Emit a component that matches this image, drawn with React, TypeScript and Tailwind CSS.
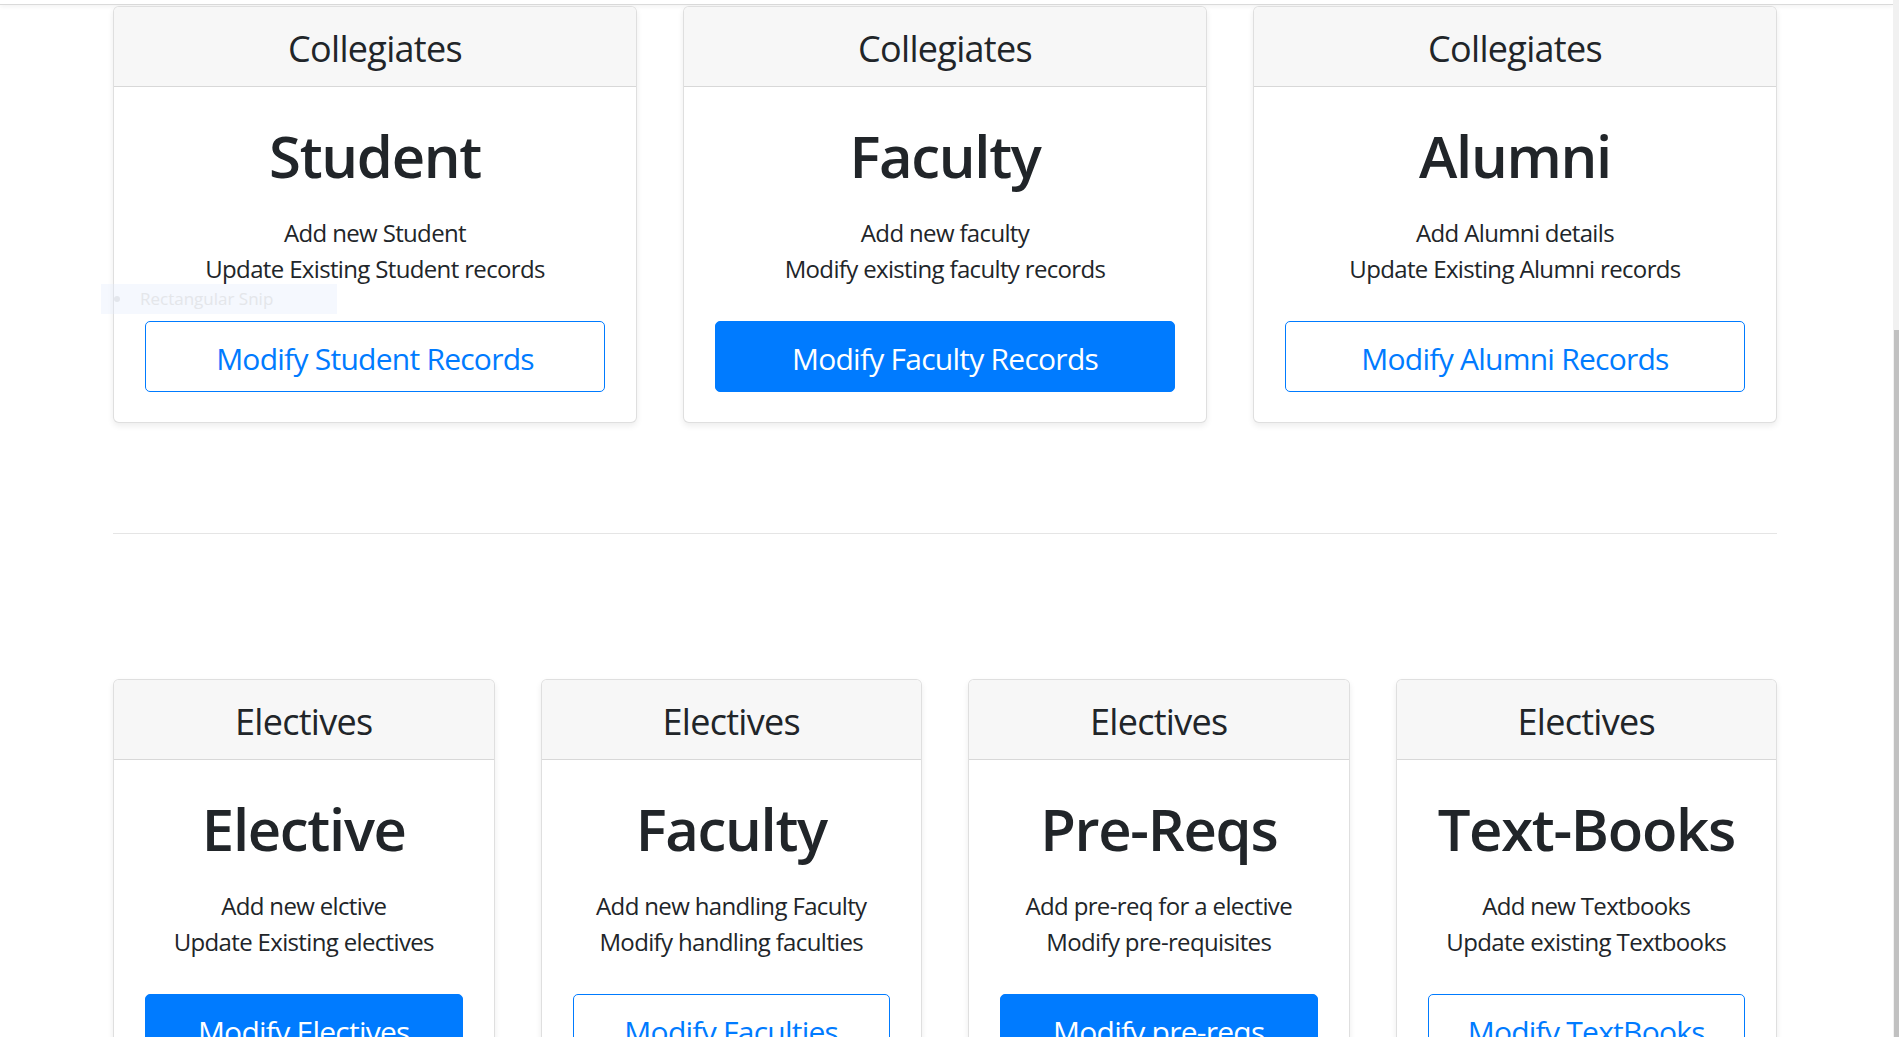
import React from "react";

type Item = {
  header: string;
  title: string;
  lines: string[];
  button: string;
  solid: boolean;
};

const collegiates: Item[] = [
  {
    header: "Collegiates",
    title: "Student",
    lines: ["Add new Student", "Update Existing Student records"],
    button: "Modify Student Records",
    solid: false,
  },
  {
    header: "Collegiates",
    title: "Faculty",
    lines: ["Add new faculty", "Modify existing faculty records"],
    button: "Modify Faculty Records",
    solid: true,
  },
  {
    header: "Collegiates",
    title: "Alumni",
    lines: ["Add Alumni details", "Update Existing Alumni records"],
    button: "Modify Alumni Records",
    solid: false,
  },
];

const electives: Item[] = [
  {
    header: "Electives",
    title: "Elective",
    lines: ["Add new elctive", "Update Existing electives"],
    button: "Modify Electives",
    solid: true,
  },
  {
    header: "Electives",
    title: "Faculty",
    lines: ["Add new handling Faculty", "Modify handling faculties"],
    button: "Modify Faculties",
    solid: false,
  },
  {
    header: "Electives",
    title: "Pre-Reqs",
    lines: ["Add pre-req for a elective", "Modify pre-requisites"],
    button: "Modify pre-reqs",
    solid: true,
  },
  {
    header: "Electives",
    title: "Text-Books",
    lines: ["Add new Textbooks", "Update existing Textbooks"],
    button: "Modify TextBooks",
    solid: false,
  },
];

function Card({ item }: { item: Item }) {
  return (
    <div className="flex flex-1 flex-col overflow-hidden rounded-[6px] border border-[rgba(0,0,0,0.125)] bg-white shadow-[0_3px_6px_rgba(0,0,0,0.075)]">
      <div className="flex h-[80px] items-center justify-center border-b border-[rgba(0,0,0,0.125)] bg-[#f7f7f7] pt-[4px]">
        <h4 className="text-[36px] font-normal leading-[43px] tracking-[-0.7px]">{item.header}</h4>
      </div>
      <div className="px-[31px] py-[30px] text-center">
        <h1 className="pt-[3px] text-[58px] font-semibold leading-[72px] tracking-[-1.3px]">{item.title}</h1>
        <ul className="mb-[34px] mt-[21px] pt-[2px] text-[24px] leading-[36px] tracking-[-0.65px]">
          {item.lines.map((line) => (
            <li key={line}>{line}</li>
          ))}
        </ul>
        <button
          className={
            item.solid
              ? "flex h-[71px] w-full items-center justify-center rounded-[5px] border border-[#007bff] bg-[#007bff] pt-[3px] text-[30px] tracking-[-0.75px] text-white"
              : "flex h-[71px] w-full items-center justify-center rounded-[5px] border border-[#007bff] bg-white pt-[3px] text-[30px] tracking-[-0.75px] text-[#007bff]"
          }
        >
          {item.button}
        </button>
      </div>
    </div>
  );
}

export default function App() {
  return (
    <div
      className="relative flex h-[1037px] w-[1899px] overflow-hidden bg-white text-[#212529]"
      style={{ fontFamily: '"Open Sans", "Noto Sans", sans-serif' }}
    >
      <div className="flex-1">
        <div className="h-[5px] border-b border-[#dadada] shadow-[0_2px_4px_rgba(0,0,0,0.05)]" />
        <div className="ml-[113px] w-[1664px]">
          <div className="mt-[1px] flex gap-[46px]">
            {collegiates.map((item) => (
              <Card key={item.title} item={item} />
            ))}
          </div>
          <hr className="mt-[110px] border-t border-[rgba(0,0,0,0.1)]" />
          <div className="mt-[145px] flex gap-[46px]">
            {electives.map((item) => (
              <Card key={item.title} item={item} />
            ))}
          </div>
        </div>
      </div>

      {/* scrollbar */}
      <div className="flex w-[6px] flex-col bg-[#f1f1f1]">
        <div className="h-[330px]" />
        <div className="ml-[1px] flex-1 bg-[#c1c1c1]" />
      </div>

      {/* faint snipping tool tooltip */}
      <div className="absolute left-[101px] top-[284px] flex h-[30px] w-[236px] items-center bg-[rgba(225,236,252,0.35)]">
        <span className="ml-[13px] h-[6px] w-[6px] rounded-full bg-[#e3e6ec]" />
        <span className="ml-[20px] text-[17px] text-[#e4e6ea]">Rectangular Snip</span>
      </div>
    </div>
  );
}
